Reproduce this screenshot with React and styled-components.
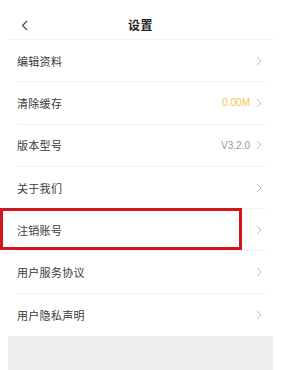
import React from "react";
import styled, { createGlobalStyle } from "styled-components";

const Global = createGlobalStyle`
  html, body { margin: 0; padding: 0; background: #fff; }
  body { font-family: "Noto Sans CJK SC", "Noto Sans", sans-serif; }
`;

const Page = styled.div`
  position: relative;
  width: 282px;
  height: 370px;
  overflow: hidden;
  padding: 0 9px 0 8px;
  box-sizing: border-box;
  display: flex;
  flex-direction: column;
`;

const Header = styled.div`
  height: 40px;
  padding-top: 10px;
  box-sizing: border-box;
  border-bottom: 1px solid #f3f3f3;
  display: grid;
  grid-template-columns: 40px 1fr 40px;
  align-items: center;
`;

const Back = styled.div`
  display: flex;
  align-items: center;
  padding-left: 13px;
  margin-top: 1px;
`;

const Title = styled.div`
  text-align: center;
  font-size: 12px;
  font-weight: 700;
  color: #222;
  letter-spacing: 0.5px;
`;

const List = styled.div`
  padding: 0 8px 0 9px;
`;

const Row = styled.div`
  height: 42.3px;
  box-sizing: border-box;
  border-bottom: ${(p) => (p.$last ? "none" : "1px solid #f3f3f3")};
  display: flex;
  align-items: center;
  justify-content: space-between;
`;

const Label = styled.span`
  font-size: 11px;
  color: #3a3a3a;
  letter-spacing: 0.3px;
`;

const Right = styled.div`
  display: flex;
  align-items: center;
  gap: 6px;
  padding-right: 3px;
`;

const Value = styled.span`
  font-family: "Liberation Sans", Arial, sans-serif;
  font-size: 10px;
  color: ${(p) => p.$color || "#999"};
`;

const Footer = styled.div`
  flex: 1;
  background: #efefef;
`;

const Highlight = styled.div`
  position: absolute;
  left: 0;
  top: 208px;
  width: 242px;
  height: 42px;
  box-sizing: border-box;
  border: 3px solid #d2161b;
  pointer-events: none;
`;

const Chevron = () => (
  <svg width="6" height="10" viewBox="0 0 6 10">
    <path d="M1 1 L5 5 L1 9" fill="none" stroke="#b8b8b8" strokeWidth="0.9" />
  </svg>
);

const BackIcon = () => (
  <svg width="7" height="11" viewBox="0 0 7 11">
    <path d="M6 1 L1.5 5.5 L6 10" fill="none" stroke="#444" strokeWidth="1.1" />
  </svg>
);

const items = [
  { label: "编辑资料" },
  { label: "清除缓存", value: "0.00M", color: "#f3c64a" },
  { label: "版本型号", value: "V3.2.0", color: "#999" },
  { label: "关于我们" },
  { label: "注销账号" },
  { label: "用户服务协议" },
  { label: "用户隐私声明" },
];

export default function App() {
  return (
    <>
      <Global />
      <Page>
        <Header>
          <Back>
            <BackIcon />
          </Back>
          <Title>设置</Title>
          <div />
        </Header>
        <List>
          {items.map((it, i) => (
            <Row key={it.label} $last={i === items.length - 1}>
              <Label>{it.label}</Label>
              <Right>
                {it.value && <Value $color={it.color}>{it.value}</Value>}
                <Chevron />
              </Right>
            </Row>
          ))}
        </List>
        <Footer />
        <Highlight />
      </Page>
    </>
  );
}
